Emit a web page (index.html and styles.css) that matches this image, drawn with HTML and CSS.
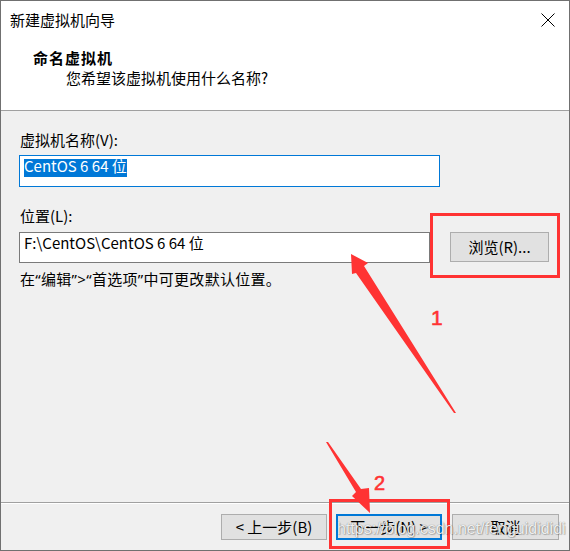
FILE: index.html
```html
<!DOCTYPE html>
<html lang="zh-CN">
<head>
<meta charset="utf-8">
<title>新建虚拟机向导</title>
<link rel="stylesheet" href="styles.css">
</head>
<body>
<div class="stage">
  <div class="window">
    <div class="titlebar">
      <span class="title">新建虚拟机向导</span>
      <svg class="close" width="14" height="14" viewBox="0 0 14 14"><path d="M0.5 0.5 L13.5 13.5 M13.5 0.5 L0.5 13.5" stroke="#000" stroke-width="1" fill="none"/></svg>
    </div>
    <div class="header">
      <div class="h-title">命名虚拟机</div>
      <div class="h-sub">您希望该虚拟机使用什么名称?</div>
    </div>
    <div class="content">
      <div class="lbl">虚拟机名称(V):</div>
      <div class="input name"><span class="sel">CentOS 6 64 位</span></div>
      <div class="lbl lbl2">位置(L):</div>
      <div class="row">
        <div class="input loc"><span class="val">F:\CentOS\CentOS 6 64 位</span></div>
        <div class="btn browse">浏览(R)...</div>
      </div>
      <div class="hint">在<span class="q">“</span>编辑<span class="q">”&gt;“</span>首选项<span class="q">”</span>中可更改默认位置。</div>
    </div>
    <div class="footer">
      <div class="btn back">&lt; 上一步(B)</div>
      <div class="btn next">下一步(N) &gt;</div>
      <div class="btn cancel">取消</div>
    </div>
  </div>
  <svg class="marks" width="570" height="551" viewBox="0 0 570 551">
    <rect x="431.5" y="214.5" width="127" height="62" fill="none" stroke="#f33" stroke-width="3"/>
    <rect x="330.5" y="500.5" width="118" height="47" fill="none" stroke="#f33" stroke-width="3"/>
    <polygon fill="#f33" points="351,254 368,263 364,266 456,413 454,413 356,273 352,274"/>
    <polygon fill="#f33" points="326,442 328,442 361,489 369,488 370,513 352,496 356,492"/>
  </svg>
  <span class="num n1">1</span>
  <span class="num n2">2</span>
  <span class="wm">https://blog.csdn.net/fenguidididi</span>
</div>
</body>
</html>
```
FILE: styles.css
```css
html, body {
  margin: 0;
  padding: 0;
  background: #f0f0f0;
}
.stage {
  position: relative;
  width: 570px;
  height: 551px;
  font-family: "Noto Sans CJK SC", "Noto Sans", sans-serif;
  font-size: 15px;
  color: #000;
}
.window {
  box-sizing: border-box;
  width: 570px;
  height: 551px;
  border: 1px solid #707070;
  display: flex;
  flex-direction: column;
  background: #f0f0f0;
}
.titlebar {
  height: 37px;
  flex: none;
  background: #fff;
  display: flex;
  align-items: center;
  padding: 0 14px 0 9px;
}
.title {
  line-height: 20px;
}
.close {
  margin-left: auto;
}
.header {
  box-sizing: border-box;
  height: 73px;
  flex: none;
  background: #fff;
  border-bottom: 1px solid #a0a0a0;
  padding-top: 9px;
}
.h-title {
  font-weight: bold;
  line-height: 21px;
  padding-left: 32px;
  letter-spacing: 1px;
}
.h-sub {
  line-height: 20px;
  padding-left: 65px;
}
.content {
  flex: 1;
  padding: 19px 0 0 18px;
}
.lbl {
  line-height: 20px;
  padding-left: 1px;
}
.lbl2 {
  margin-top: 19px;
}
.input {
  box-sizing: border-box;
  background: #fff;
  border: 1px solid #7a7a7a;
  padding: 3px 4px 0 4px;
  line-height: 14px;
  white-space: nowrap;
}
.name {
  width: 421px;
  height: 32px;
  margin-top: 5px;
  border-color: #0078d7;
}
.sel {
  display: inline-block;
  background: #0078d7;
  color: #fff;
  line-height: 14px;
  padding-bottom: 4px;
}
.val {
  display: inline-block;
  line-height: 14px;
}
.row {
  display: flex;
  align-items: flex-start;
  margin-top: 6px;
}
.loc {
  width: 411px;
  height: 31px;
}
.btn {
  box-sizing: border-box;
  background: #e1e1e1;
  border: 1px solid #adadad;
  display: flex;
  align-items: center;
  justify-content: center;
  line-height: 20px;
  white-space: nowrap;
}
.browse {
  width: 99px;
  height: 30px;
  margin-left: 20px;
}
.hint {
  margin-top: 6px;
  line-height: 20px;
  padding-left: 1px;
  letter-spacing: 0.3px;
}
.q {
  font-family: "Noto Sans", "Liberation Sans", sans-serif;
}
.footer {
  box-sizing: border-box;
  height: 48px;
  flex: none;
  border-top: 1px solid #a0a0a0;
  box-shadow: inset 0 1px 0 #fff;
  display: flex;
  justify-content: flex-end;
  align-items: flex-start;
  padding: 11px 10px 0 0;
}
.footer .btn {
  height: 26px;
}
.back {
  width: 106px;
  margin-right: 9px;
}
.next {
  width: 106px;
  margin-right: 10px;
  border: 2px solid #0078d7;
}
.cancel {
  width: 107px;
}
.marks {
  position: absolute;
  left: 0;
  top: 0;
  pointer-events: none;
}
.num {
  position: absolute;
  font-family: "Liberation Sans", Arial, sans-serif;
  color: #f33;
  line-height: 1;
  -webkit-text-stroke: 0.6px #f33;
}
.n1 {
  left: 431px;
  top: 307px;
  font-size: 21px;
}
.n2 {
  left: 374px;
  top: 473px;
  font-size: 20px;
}
.wm {
  position: absolute;
  left: 337px;
  top: 521px;
  font-family: "Liberation Sans", Arial, sans-serif;
  font-size: 16px;
  line-height: 16px;
  color: rgba(255, 255, 255, 0.9);
  text-shadow: 0 0 1px rgba(0, 0, 0, 0.5), 1px 1px 1px rgba(0, 0, 0, 0.2);
  white-space: nowrap;
}
```
